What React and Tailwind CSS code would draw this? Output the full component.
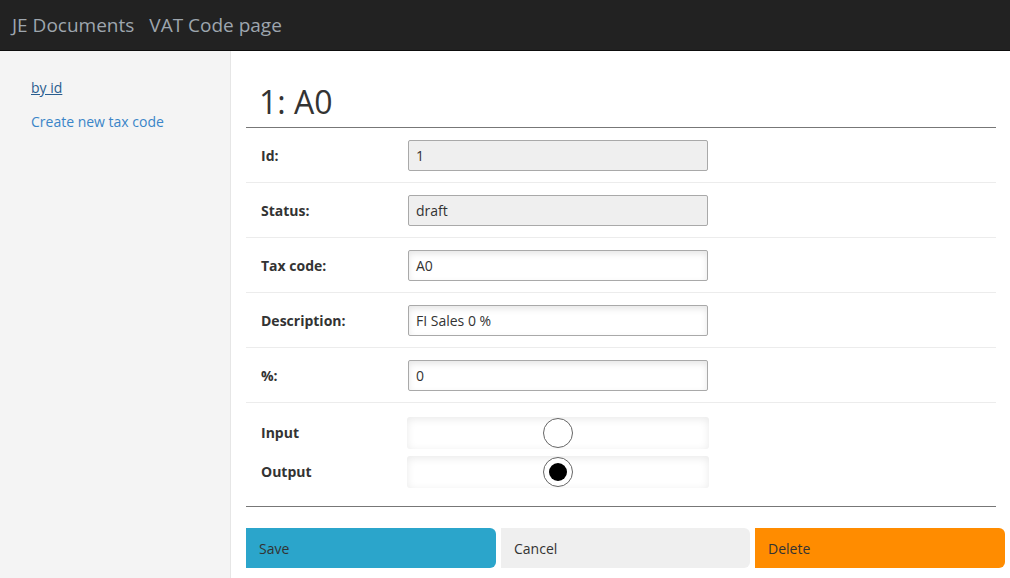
import React from "react";

const font = { fontFamily: '"Open Sans", "Liberation Sans", sans-serif' };

function Row({ label, value, disabled }) {
  return (
    <div className="flex h-[55px] items-center border-b border-[#ececec]">
      <div className="w-[162px] pl-[15px] text-[14px] font-bold text-[#333]">{label}</div>
      <div
        className={
          "flex h-[31px] w-[300px] items-center rounded-[2px] border border-[#a9a9a9] px-[7px] text-[14px] text-[#333] " +
          (disabled
            ? "bg-[#efefef]"
            : "bg-white shadow-[inset_0_3px_6px_rgba(0,0,0,0.10)]")
        }
      >
        {value}
      </div>
    </div>
  );
}

function Radio({ label, checked }) {
  return (
    <div className="flex h-[39px] items-center">
      <div className="w-[161px] pl-[15px] text-[14px] font-bold text-[#333]">{label}</div>
      <div className="flex h-[32px] w-[302px] items-center justify-center rounded-[3px] bg-white shadow-[inset_0_2px_8px_rgba(0,0,0,0.09)]">
        <div className="flex h-[30px] w-[30px] items-center justify-center rounded-full border border-[#666] bg-white">
          {checked && <div className="h-[18px] w-[18px] rounded-full bg-black" />}
        </div>
      </div>
    </div>
  );
}

export default function App() {
  return (
    <div className="flex min-h-screen flex-col bg-white" style={font}>
      <div className="flex h-[51px] items-center gap-[15px] border-b border-[#0d0d0d] bg-[#222222] pl-[12px] text-[19px] text-[#9ea6ae]">
        <span>JE Documents</span>
        <span>VAT Code page</span>
      </div>
      <div className="flex flex-1">
        <div className="w-[231px] border-r border-[#e6e6e6] bg-[#f4f4f4] pl-[31px] pt-[27px] text-[14px]">
          <div className="h-[20px] leading-[20px]">
            <a className="text-[#2a5d8f] underline">by id</a>
          </div>
          <div className="mt-[14px] leading-[20px] text-[#3a85c8]">Create new tax code</div>
        </div>
        <div className="flex-1 pl-[15px] pr-[5px]">
          <div className="mr-[9px]">
            <div className="flex h-[76px] items-end pb-[9px] pl-[13px] text-[32px] leading-none text-[#333]">
              1: A0
            </div>
            <div className="border-t border-[#777]" />
            <Row label="Id:" value="1" disabled />
            <Row label="Status:" value="draft" disabled />
            <Row label="Tax code:" value="A0" />
            <Row label="Description:" value="FI Sales 0 %" />
            <Row label="%:" value="0" />
            <div className="pt-[10px] pb-[15px]">
              <Radio label="Input" />
              <Radio label="Output" checked />
            </div>
            <div className="border-t border-[#777]" />
          </div>
          <div className="mt-[21px] flex gap-[5px]">
            <button className="h-[40px] w-[250px] rounded-r-[6px] bg-[#2ba5cb] pl-[13px] text-left text-[14px] text-[#333]">
              Save
            </button>
            <button className="h-[40px] w-[249px] rounded-r-[6px] bg-[#efefef] pl-[13px] text-left text-[14px] text-[#333]">
              Cancel
            </button>
            <button className="h-[40px] w-[250px] rounded-r-[6px] bg-[#ff8c00] pl-[13px] text-left text-[14px] text-[#333]">
              Delete
            </button>
          </div>
        </div>
      </div>
    </div>
  );
}
